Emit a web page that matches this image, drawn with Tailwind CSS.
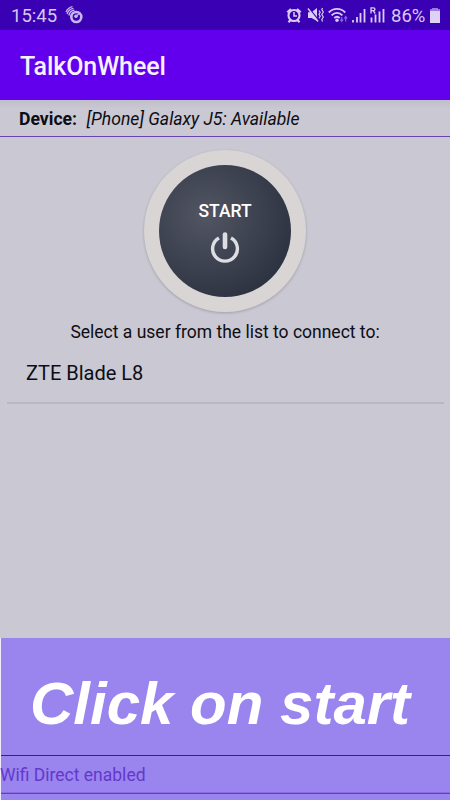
<!DOCTYPE html>
<html lang="en">
<head>
<meta charset="utf-8">
<title>TalkOnWheel</title>
<script src="https://cdn.jsdelivr.net/npm/@tailwindcss/browser@4"></script>
</head>
<body class="w-[450px] h-[800px] overflow-hidden bg-[#c9c8d3] font-['Roboto',sans-serif] text-[#0d0d14] whitespace-nowrap">
<div class="flex flex-col w-[450px] h-[800px]">
  <!-- Status bar -->
  <div class="h-[30px] shrink-0 bg-[#3a00b3] flex items-center pl-[11px] text-[18.5px] leading-[30px] text-[#d6c9f2]">
    <span class="w-[46px] pt-px">15:45</span>
    <svg class="ml-[8px]" width="20" height="20" viewBox="0 0 20 20" fill="none" stroke="#c9b6f0">
      <circle cx="11.300" cy="12" r="5" stroke-width="2.600"/>
      <circle cx="11" cy="11.200" r="1.800" fill="#c9b6f0" stroke="none"/>
      <path d="M11 11L14.500 8.500" stroke-width="1.200"/>
      <path d="M3.800 10.500C4.500 7.500 6.500 5.600 9.500 5.200M2 9C3 5.800 5.500 3.800 8.500 3.300M1 7C2.300 4.200 4.500 2.300 7.500 1.700" stroke-width="1.300"/>
    </svg>
    <svg class="ml-[200px]" width="106" height="24" viewBox="285 3 106 24" fill="none" stroke="#d9ccf5">
      <circle cx="294" cy="15.500" r="5.500" stroke-width="2.100"/>
      <path d="M287.300 12.300L291 9M300.700 12.300L297 9M290.500 20L288.500 22.300M297.500 20L299.500 22.300" stroke-width="2.200"/>
      <path d="M294 12V16H297" stroke-width="1.500"/>
      <path d="M308 12.300H311.500L317 8V21L311.500 18H308Z" fill="#d9ccf5" stroke="none"/>
      <path d="M308.800 8L318.800 20.500" stroke="#3a00b3" stroke-width="1.300"/>
      <path d="M308 8.500L318 21.500" stroke-width="1.400"/>
      <path d="M319 10.500L320.200 12.300L319 14.300L320.200 16.300L319 18.300M322.500 8L321.800 9.500L323.300 12L321.800 14.500L323.300 17L321.800 19.500L322.500 21.500" stroke-width="1.200"/>
      <path d="M328.800 12.500C333.500 7.700 340.500 7.700 345.200 12.500M331.600 15.300C334.800 12 339.200 12 342.400 15.300M334.300 18C336 16.400 338 16.400 339.700 18" stroke-width="1.900"/>
      <circle cx="337" cy="20.300" r="1.700" fill="#d9ccf5" stroke="none"/>
      <path d="M341.700 17V21M340.300 19.500L341.700 21.500L343.100 19.500M345.700 21.500V17M344.300 18.500L345.700 16.500L347.100 18.500" stroke="#8b66dc" stroke-width="1.200"/>
      <path d="M353 20V22.500M357 17V22.500M360.500 13V22.500M364.500 9V22.500M371.500 17.500V22.500M375.500 14.500V22.500M379.500 11.500V22.500M383.500 9V22.500" stroke-width="1.800"/>
      <path d="M371 13.500V7.800H373.300Q375 7.800 375 9.200T373.300 10.700H371M373.200 10.700L375.200 13.500" stroke-width="1.300"/>
    </svg>
    <span class="w-[36px] pt-px">86%</span>
    <svg class="ml-[2px]" width="12" height="18" viewBox="0 0 12 18"><path d="M3.500 2H8.500V3.500H11V17H1V3.500H3.500Z" fill="#ddd2f6"/><path d="M3.500 2H8.500V3.500H11V5H1V3.500H3.500Z" fill="#9a7be0"/></svg>
  </div>
  <!-- App bar -->
  <div class="h-[70px] shrink-0 bg-[#6200ee] flex items-center pl-[20px] pt-[4px] text-[25px] tracking-[-0.08px] font-medium text-[#f6f0ff]">
    <span>TalkOnWheel</span>
  </div>
  <!-- Device row -->
  <div class="h-[37px] shrink-0 border-b border-[#6a44b5] bg-linear-to-b from-[#bfbec9] via-[#c9c8d3] via-25% to-[#c9c8d3] flex items-center pl-[19px] pt-[3px] text-[17.600px]">
    <span class="font-bold w-[67.500px]">Device:</span><span class="italic">[Phone] Galaxy J5: Available</span>
  </div>
  <!-- Start button -->
  <div class="h-[177px] shrink-0 flex justify-center pt-[13px]">
    <div class="w-[162px] h-[162px] rounded-full bg-[#d9d5d4] shadow-[0_1px_3px_rgba(0,0,0,0.2)] flex items-center justify-center">
      <div class="w-[132px] h-[132px] rounded-full bg-radial-[at_35%_38%] from-[#525663] to-[#2c3140] to-80% flex flex-col items-center text-white">
        <span class="mt-[36px] text-[17.500px] leading-[20px] font-medium">START</span>
        <svg class="mt-[10px]" width="32" height="34" viewBox="0 0 32 34" fill="none" stroke="#dcdee3" stroke-linecap="round">
          <path d="M10 6.900A12.400 12.400 0 1 0 22 6.900" stroke-width="3.400" stroke-linecap="butt"/>
          <path d="M16 3.600V15.900" stroke-width="4.600"/>
        </svg>
      </div>
    </div>
  </div>
  <div class="h-[35px] shrink-0 text-center text-[17.500px] leading-[36px]">Select a user from the list to connect to:</div>
  <div class="h-[55px] shrink-0 ml-[7px] mr-[6px] border-b-2 border-[#b9b8c2] pl-[19px] text-[20px] leading-[48px]">ZTE Blade L8</div>
  <div class="flex-1"></div>
  <!-- Caption banner -->
  <div class="h-[162px] shrink-0 border-l border-[#efedf8] bg-[#9a84ee] flex flex-col">
    <div class="h-[118px] border-b border-[#4a0bbb] pl-[29px] pt-[33px] font-['Liberation_Sans',Arial,sans-serif] text-[60px] leading-[66px] font-bold italic text-white">Click on start</div>
    <div class="h-[38px] border-b border-[#6a38d8] shadow-[inset_0_-1px_0_#8a6ae8] text-[17.500px] leading-[39px] text-[#6438cc]"><span class="-ml-px">Wifi Direct enabled</span></div>
  </div>
</div>
</body>
</html>
